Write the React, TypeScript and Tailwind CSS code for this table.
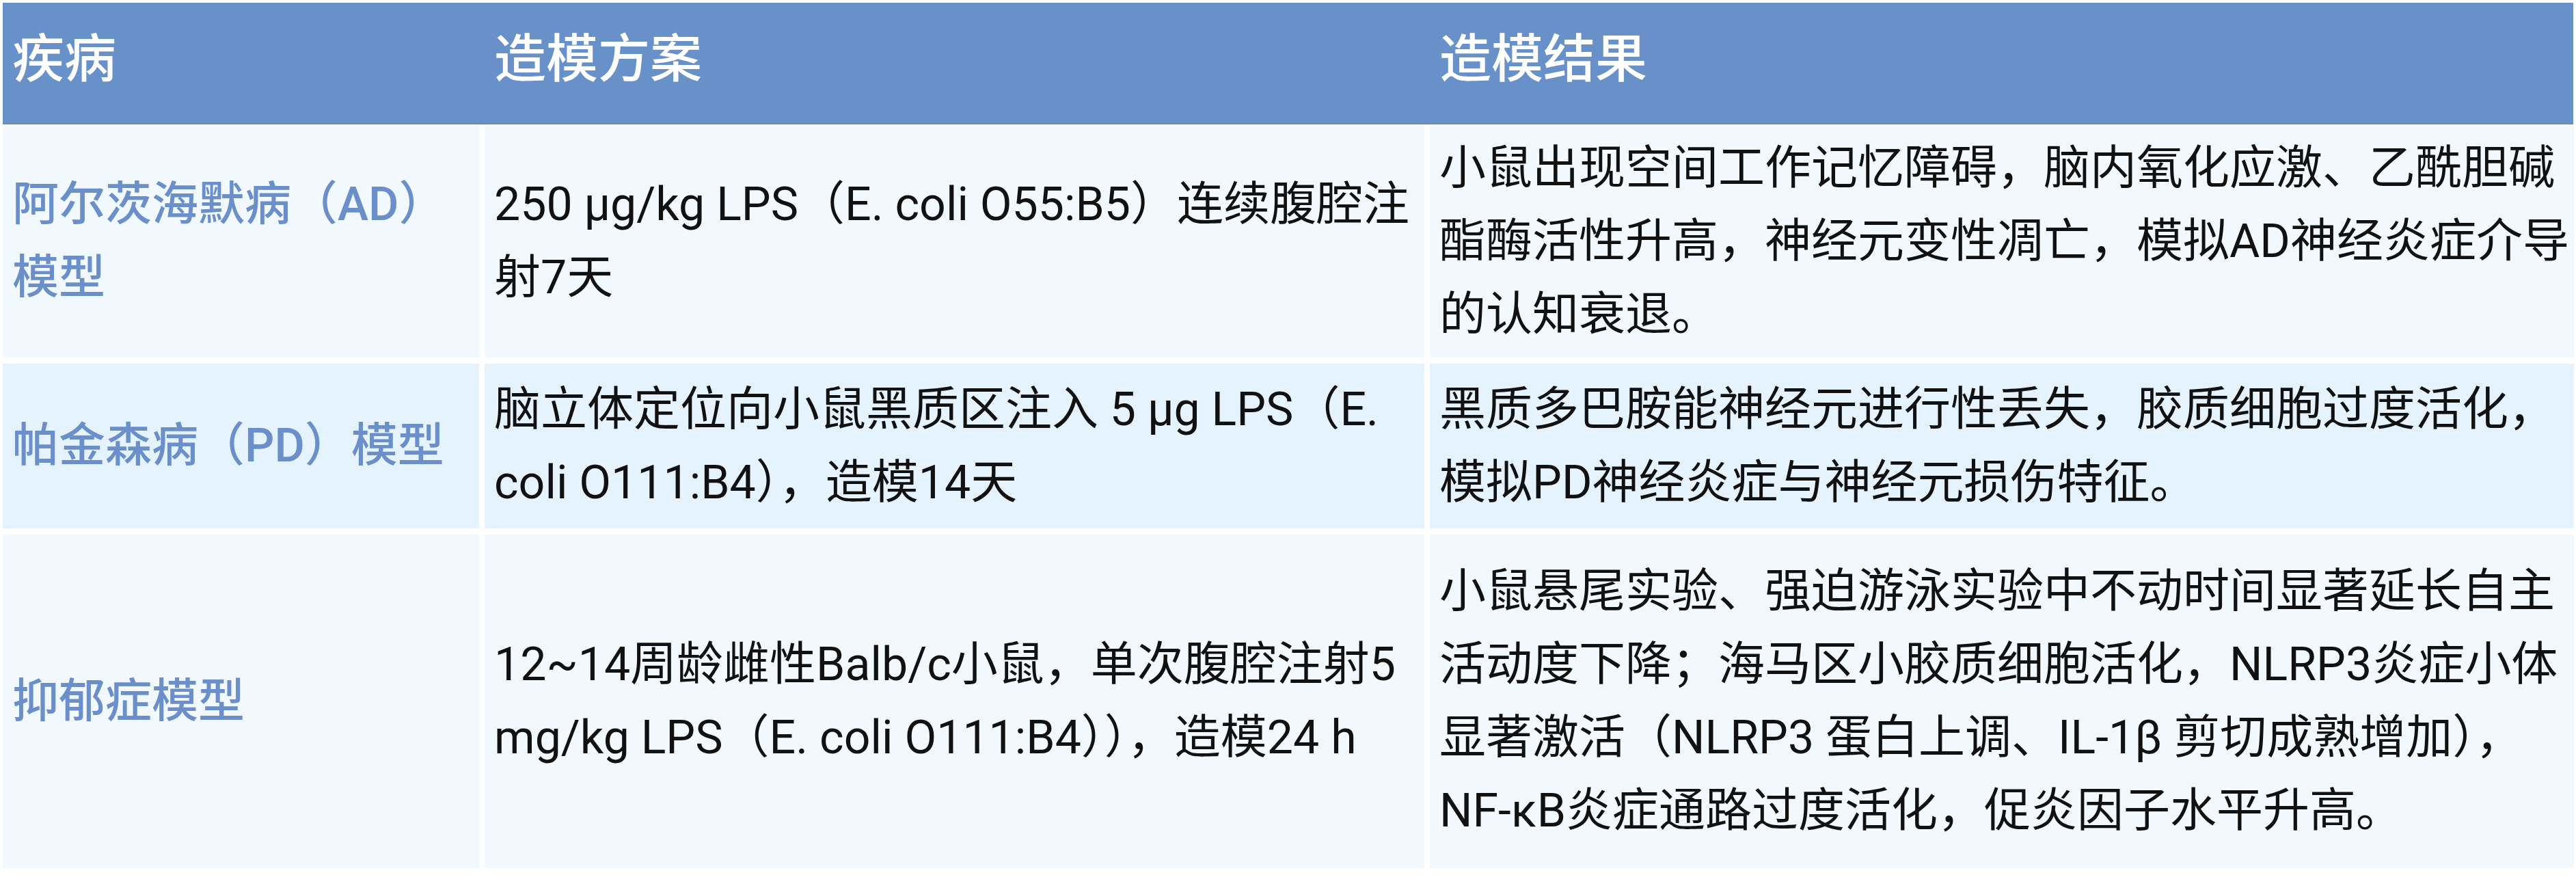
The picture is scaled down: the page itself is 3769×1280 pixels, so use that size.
const font = {
  fontFamily: '"Roboto", "Noto Sans CJK SC", sans-serif',
};

type Row = {
  disease: string[];
  plan: string[];
  result: string[];
  height: string;
  bg: string;
};

const rows: Row[] = [
  {
    disease: ["阿尔茨海默病（AD）", "模型"],
    plan: ["250 μg/kg LPS（E. coli O55:B5）连续腹腔注", "射7天"],
    result: [
      "小鼠出现空间工作记忆障碍，脑内氧化应激、乙酰胆碱",
      "酯酶活性升高，神经元变性凋亡，模拟AD神经炎症介导",
      "的认知衰退。",
    ],
    height: "h-[340px]",
    bg: "bg-[#f2f9fe]",
  },
  {
    disease: ["帕金森病（PD）模型"],
    plan: ["脑立体定位向小鼠黑质区注入 5 μg LPS（E.", "coli O111:B4），造模14天"],
    result: [
      "黑质多巴胺能神经元进行性丢失，胶质细胞过度活化，",
      "模拟PD神经炎症与神经元损伤特征。",
    ],
    height: "h-[241px]",
    bg: "bg-[#e4f3fd]",
  },
  {
    disease: ["抑郁症模型"],
    plan: [
      "12~14周龄雌性Balb/c小鼠，单次腹腔注射5",
      "mg/kg LPS（E. coli O111:B4）），造模24 h",
    ],
    result: [
      "小鼠悬尾实验、强迫游泳实验中不动时间显著延长自主",
      "活动度下降；海马区小胶质细胞活化，NLRP3炎症小体",
      "显著激活（NLRP3 蛋白上调、IL-1β 剪切成熟增加），",
      "NF-κB炎症通路过度活化，促炎因子水平升高。",
    ],
    height: "h-[488px]",
    bg: "bg-[#f2f9fe]",
  },
];

const Lines = ({ lines }: { lines: string[] }) => (
  <div className="whitespace-nowrap">
    {lines.map((l, i) => (
      <div key={i}>{l}</div>
    ))}
  </div>
);

export default function App() {
  return (
    <div className="w-[3769px] h-[1280px] bg-white pt-[4px] px-[4px]" style={font}>
      <div className="grid grid-cols-[697px_1375px_1674px] gap-x-[8px] h-[178px] bg-[#6890c9] border-b border-[#5b83c3] text-white text-[76px] font-medium">
        <div className="flex items-center pl-[14px] pb-[12px]">疾病</div>
        <div className="flex items-center pl-[14px] pb-[12px]">造模方案</div>
        <div className="flex items-center pl-[14px] pb-[12px]">造模结果</div>
      </div>
      <div className="flex flex-col gap-y-[9px] mt-[1px]">
        {rows.map((r, i) => (
          <div
            key={i}
            className={`grid grid-cols-[697px_1375px_1674px] gap-x-[8px] ${r.height} text-[68px] leading-[107px]`}
          >
            <div className={`${r.bg} flex items-center pl-[14px] text-[#6a8fca] font-medium`}>
              <Lines lines={r.disease} />
            </div>
            <div className={`${r.bg} flex items-center pl-[14px] text-[#111]`}>
              <Lines lines={r.plan} />
            </div>
            <div className={`${r.bg} flex items-center pl-[14px] text-[#111]`}>
              <Lines lines={r.result} />
            </div>
          </div>
        ))}
      </div>
    </div>
  );
}
